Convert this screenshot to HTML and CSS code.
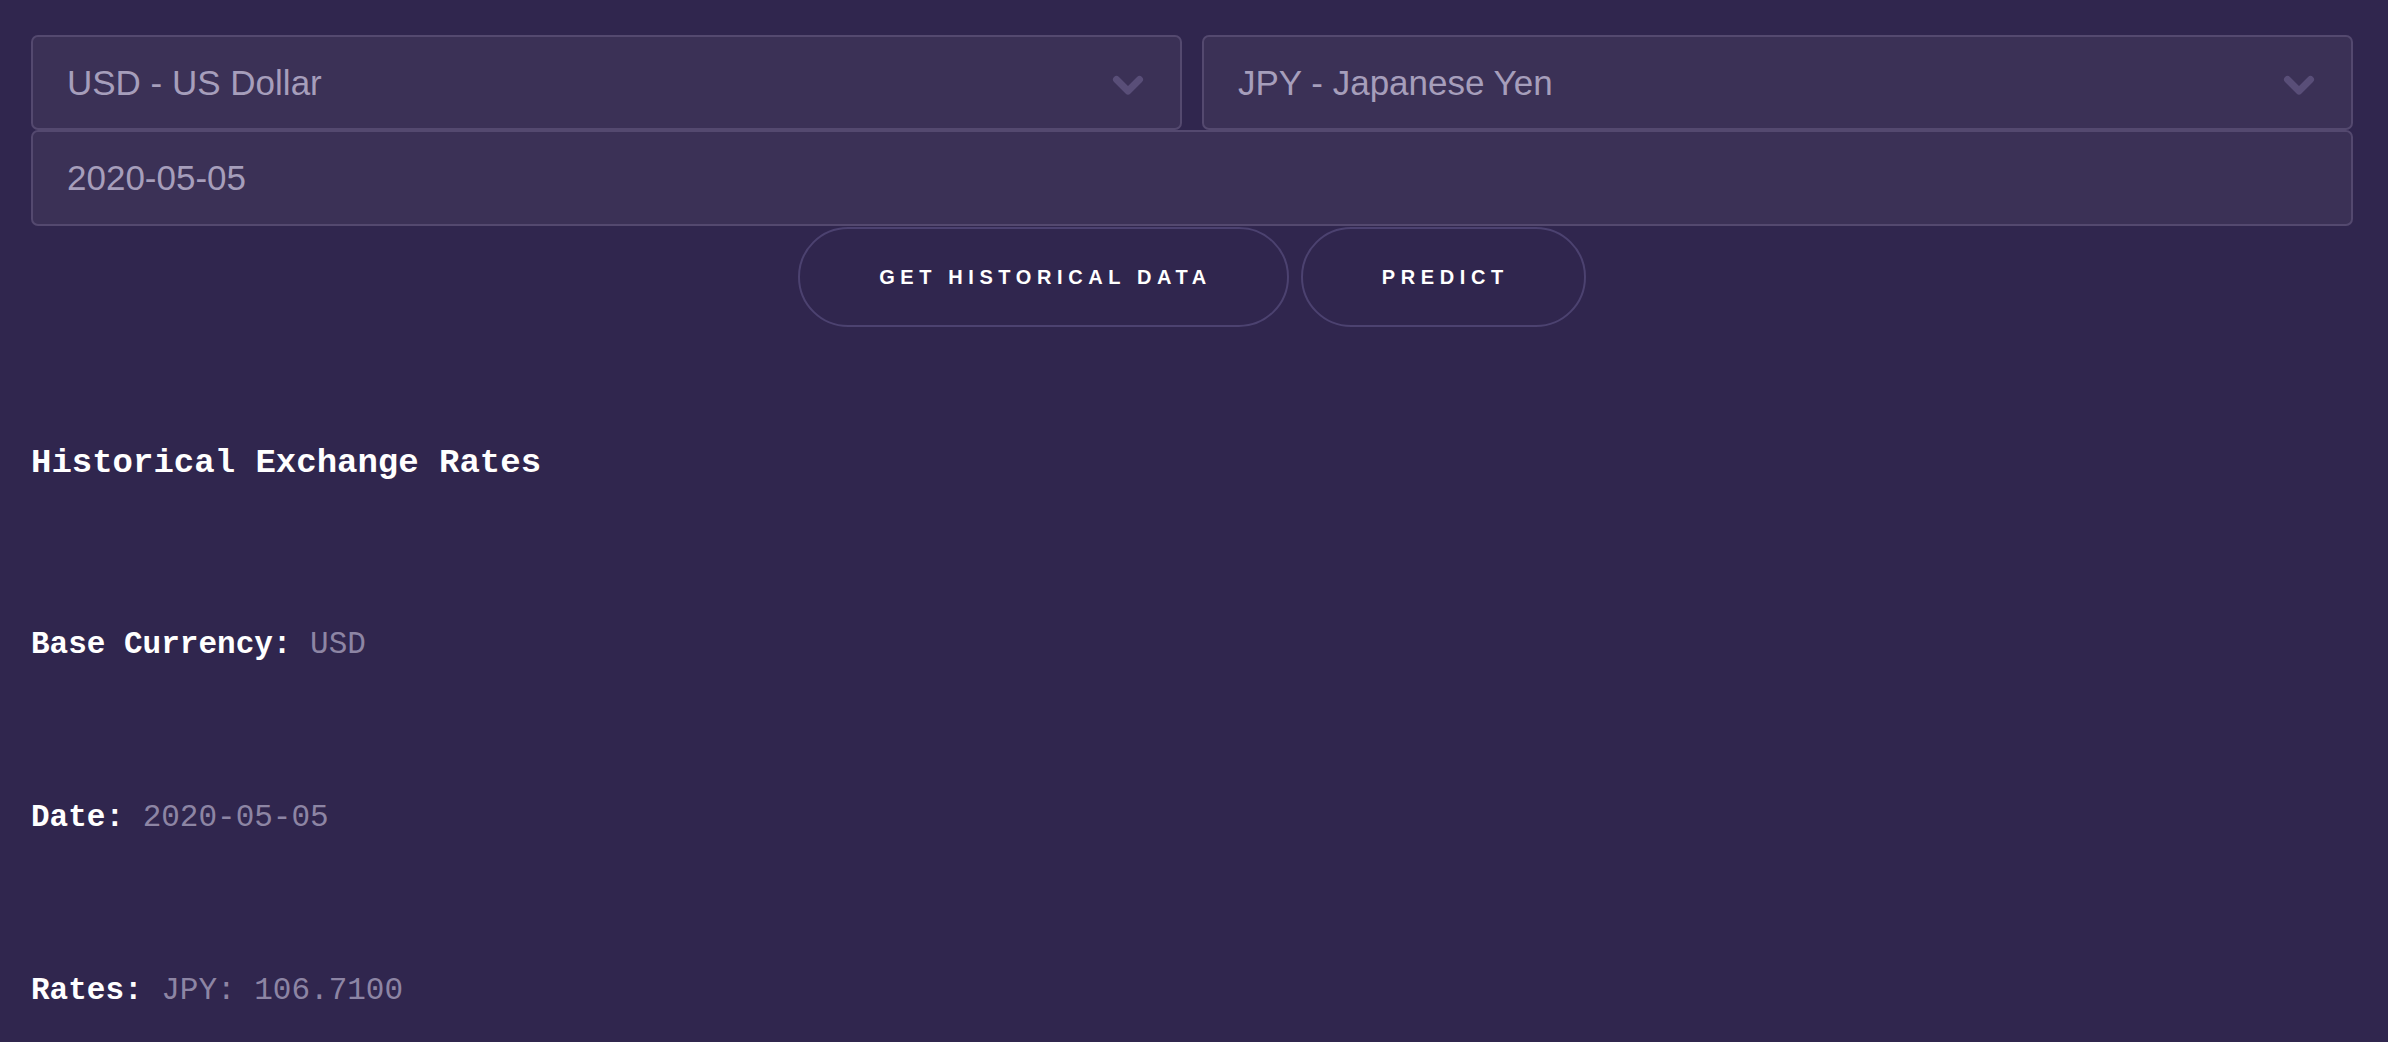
FILE: index.html
```html
<!DOCTYPE html>
<html lang="en">
<head>
<meta charset="utf-8">
<title>Historical Exchange Rates</title>
<link rel="stylesheet" href="styles.css">
</head>
<body>
<main class="page">
  <form class="form">
    <div class="select-row">
      <div class="select-wrap">
        <select class="select">
          <option>USD - US Dollar</option>
        </select>
        <svg class="chevron" width="32" height="22" viewBox="0 0 32 22"><polyline points="4.5,4.5 16,16 27.5,4.5" fill="none" stroke="currentColor" stroke-width="7" stroke-linecap="round" stroke-linejoin="round"/></svg>
      </div>
      <div class="select-wrap">
        <select class="select">
          <option>JPY - Japanese Yen</option>
        </select>
        <svg class="chevron" width="32" height="22" viewBox="0 0 32 22"><polyline points="4.5,4.5 16,16 27.5,4.5" fill="none" stroke="currentColor" stroke-width="7" stroke-linecap="round" stroke-linejoin="round"/></svg>
      </div>
    </div>
    <input class="date-input" type="text" value="2020-05-05">
    <div class="actions">
      <button type="button" class="btn">GET HISTORICAL DATA</button>
      <button type="button" class="btn">PREDICT</button>
    </div>
  </form>
  <section class="results">
    <h2 class="title">Historical Exchange Rates</h2>
    <p class="row"><span class="label">Base Currency:</span> <span class="value">USD</span></p>
    <p class="row"><span class="label">Date:</span> <span class="value">2020-05-05</span></p>
    <p class="row last"><span class="label">Rates:</span> <span class="value">JPY: 106.7100</span></p>
  </section>
</main>
</body>
</html>
```
FILE: styles.css
```css
html, body {
  margin: 0;
  padding: 0;
  background: #30264e;
}

body {
  font-family: "Liberation Sans", Arial, sans-serif;
  height: 1042px;
  overflow: hidden;
}

.page {
  padding: 35px 35px 0 31px;
}

.form {
  display: flex;
  flex-direction: column;
}

.select-row {
  display: flex;
  gap: 20px;
}

.select-wrap {
  position: relative;
  flex: 1 1 0;
}

.select {
  -webkit-appearance: none;
  appearance: none;
  box-sizing: border-box;
  width: 100%;
  height: 95px;
  margin: 0;
  padding: 0 80px 0 34px;
  background: #3b3156;
  border: 2px solid #54496f;
  border-radius: 7px;
  color: #a69ebb;
  font-family: "Liberation Sans", Arial, sans-serif;
  font-size: 35px;
  outline: none;
}

.chevron {
  position: absolute;
  right: 38px;
  top: 40px;
  color: #594e78;
  pointer-events: none;
}

.date-input {
  box-sizing: border-box;
  width: 100%;
  height: 96px;
  margin: 0;
  padding: 0 34px;
  background: #3b3156;
  border: 2px solid #54496f;
  border-radius: 7px;
  color: #a69ebb;
  font-family: "Liberation Sans", Arial, sans-serif;
  font-size: 35px;
  outline: none;
}

.actions {
  display: flex;
  justify-content: center;
  gap: 12px;
  margin-top: 1px;
}

.btn {
  box-sizing: border-box;
  height: 100px;
  padding: 0 75px 0 79px;
  background: transparent;
  border: 2px solid #4c4270;
  border-radius: 50px;
  color: #ffffff;
  font-family: "Liberation Sans", Arial, sans-serif;
  font-weight: bold;
  font-size: 20px;
  line-height: 22px;
  letter-spacing: 5.6px;
  cursor: pointer;
}

.results {
  font-family: "Liberation Mono", "Courier New", monospace;
  color: #ffffff;
  padding-top: 116px;
}

.title {
  margin: 0 0 144px;
  font-size: 34px;
  line-height: 40px;
  font-weight: bold;
}

.row {
  margin: 0 0 137px;
  font-size: 31px;
  line-height: 36px;
}

.row.last {
  margin-bottom: 0;
}

.label {
  font-weight: bold;
  color: #ffffff;
}

.value {
  color: #8d85a4;
}
```
